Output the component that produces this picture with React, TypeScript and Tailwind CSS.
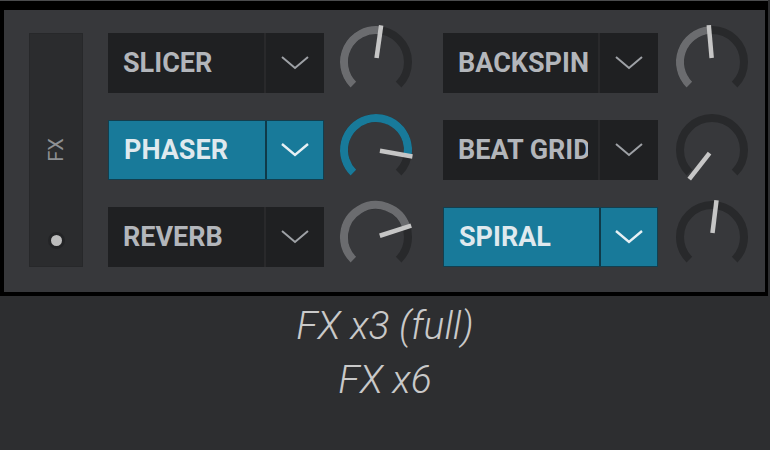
import React from "react";

const polar = (cx: number, cy: number, r: number, a: number) => {
  const rad = (a * Math.PI) / 180;
  return [cx + r * Math.sin(rad), cy - r * Math.cos(rad)];
};

const arc = (cx: number, cy: number, r: number, a0: number, a1: number) => {
  const [x0, y0] = polar(cx, cy, r, a0);
  const [x1, y1] = polar(cx, cy, r, a1);
  const large = a1 - a0 > 180 ? 1 : 0;
  return `M ${x0} ${y0} A ${r} ${r} 0 ${large} 1 ${x1} ${y1}`;
};

function Knob({ angle, fill }: { angle: number; fill?: string }) {
  const c = 38;
  const [px0, py0] = polar(c, c, 4, angle);
  const [px1, py1] = polar(c, c, 37, angle);
  return (
    <svg width="76" height="76" viewBox="0 0 76 76" className="shrink-0">
      <path d={arc(c, c, 32, -135, 135)} stroke="#28292b" strokeWidth="8" fill="none" />
      {fill && <path d={arc(c, c, 32, -135, angle)} stroke={fill} strokeWidth="8" fill="none" />}
      <line x1={px0} y1={py0} x2={px1} y2={py1} stroke="#c6c6c6" strokeWidth="4.5" />
    </svg>
  );
}

function Chevron({ active }: { active: boolean }) {
  return (
    <svg width="30" height="16" viewBox="0 0 30 16">
      <polyline
        points="2,2 15,13 28,2"
        fill="none"
        stroke={active ? "#e6f0f4" : "#9ea1a6"}
        strokeWidth={active ? 2.4 : 2}
      />
    </svg>
  );
}

function FxSelect({ label, active, w, tw }: { label: string; active?: boolean; w: string; tw: string }) {
  return (
    <div
      className={`flex h-[60px] ${w} shrink-0 ${
        active ? "bg-[#0f3a49] border border-[#123f4f]" : "bg-[#29292b]"
      }`}
    >
      <div
        className={`${tw} h-full flex items-center pl-[15px] pr-[10px] overflow-hidden whitespace-nowrap font-bold text-[27px] leading-normal ${
          active ? "bg-[#187a9a] text-[#dfe9ee]" : "bg-[#1f2022] text-[#b3b6bb]"
        }`}
        style={{ fontFamily: "Roboto, 'Liberation Sans', sans-serif" }}
      >
        <span className="block overflow-hidden">{label}</span>
      </div>
      <div
        className={`flex-1 ml-[2px] h-full flex items-center justify-center ${
          active ? "bg-[#187a9a]" : "bg-[#1f2022]"
        }`}
      >
        <Chevron active={!!active} />
      </div>
    </div>
  );
}

const rows = [
  {
    l: { label: "SLICER" },
    lk: { angle: 8, fill: "#6b6c6f" },
    r: { label: "BACKSPIN" },
    rk: { angle: -5, fill: "#6b6c6f" },
  },
  {
    l: { label: "PHASER", active: true },
    lk: { angle: 100, fill: "#187a9a" },
    r: { label: "BEAT GRID" },
    rk: { angle: -142 },
  },
  {
    l: { label: "REVERB" },
    lk: { angle: 72, fill: "#6b6c6f" },
    r: { label: "SPIRAL", active: true },
    rk: { angle: 7 },
  },
];

export default function App() {
  return (
    <div className="w-[770px] h-[450px] bg-[#2d2e30] flex flex-col overflow-hidden">
      <div className="w-[768px] bg-black border-t border-[#4a4b4d] pt-[9px] pl-[4px] pr-[3px] pb-[4px]">
        <div className="h-[282px] bg-[#37383b] pt-[23px] pl-[25px] flex gap-[25px]">
          <div className="w-[54px] h-[234px] bg-[#2b2c2e] border border-[#27282a] grid grid-rows-[1fr_auto_1fr] justify-items-center">
            <div />
            <div
              className="-rotate-90 text-[20px] leading-none text-[#8e9093]"
              style={{ fontFamily: "Roboto, 'Liberation Sans', sans-serif" }}
            >
              FX
            </div>
            <div className="self-end mb-[17px] w-[17px] h-[17px] rounded-full bg-[#bdbdbd] border-[3px] border-[#232426]" />
          </div>
          <div className="flex flex-col gap-[27px]">
            {rows.map((row, i) => (
              <div key={i} className="flex items-center h-[60px]">
                <FxSelect label={row.l.label} active={row.l.active} w="w-[216px]" tw="w-[156px]" />
                <div className={`ml-[14px] ${i === 0 ? "mb-[3px]" : ""}`}>
                  <Knob angle={row.lk.angle} fill={row.lk.fill} />
                </div>
                <div className="ml-[29px]">
                  <FxSelect label={row.r.label} active={row.r.active} w="w-[215px]" tw="w-[155px]" />
                </div>
                <div className={`ml-[16px] ${i === 0 ? "mb-[3px]" : ""}`}>
                  <Knob angle={row.rk.angle} fill={row.rk.fill} />
                </div>
              </div>
            ))}
          </div>
        </div>
      </div>
      <div
        className="pt-[3px] flex flex-col items-center italic font-light text-[39px] leading-[54px] text-[#c9c9c9]"
        style={{ fontFamily: "Roboto, 'Liberation Sans', sans-serif" }}
      >
        <div>FX x3 (full)</div>
        <div>FX x6</div>
      </div>
    </div>
  );
}
